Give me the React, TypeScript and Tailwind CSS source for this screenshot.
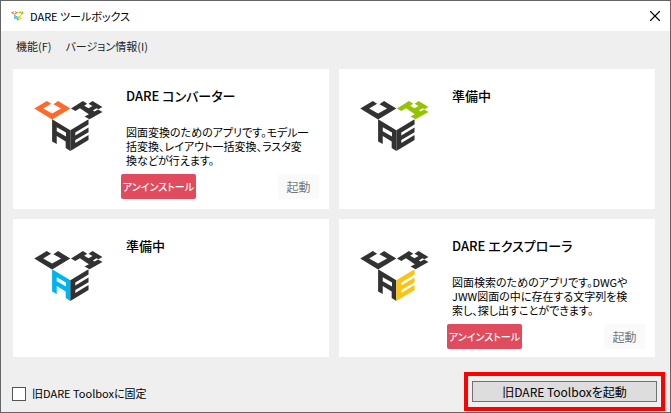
import { X } from 'lucide-react';

type Face = 'd' | 'r' | 'a' | 'e';

const DARK = '#323232';

const accents: Record<Face, string> = {
  d: '#ff6a2b',
  r: '#94c400',
  a: '#00b4f0',
  e: '#ffc20e',
};

const faces: Record<Face, string> = {
  d: 'M0 22L38 -1L51 7L27 22L54 37L81 22L58 9L72 -1L109 22L54 55Z',
  r: 'M111 22L147 -1L160 7L151 13L164 21L176 14L164 7L176 -1L206 17L194 24L188 21L177 28L182 31L193 25L206 32L167 54L152 46L165 39L138 21L124 29Z',
  a: 'M54 54L109 87V150L95 141V121L68 105V129L54 121ZM68 78V90L96 106V94Z',
  e: 'M109 87L164 54V70L124 94V103L164 79V93L124 117V126L164 102V117L109 150Z',
};

function Logo({ active, className }: { active: Face | 'all'; className: string }) {
  return (
    <svg viewBox="0 -1 207 151" className={className} aria-hidden="true">
      {(Object.keys(faces) as Face[]).map((face) => (
        <path
          key={face}
          d={faces[face]}
          fillRule="evenodd"
          fill={active === 'all' || active === face ? accents[face] : DARK}
        />
      ))}
    </svg>
  );
}

interface Tool {
  face: Face;
  title: string;
  lines?: string[];
}

const tools: Tool[] = [
  {
    face: 'd',
    title: 'DARE コンバーター',
    lines: ['図面変換のためのアプリです。モデル一', '括変換、レイアウト一括変換、ラスタ変', '換などが行えます。'],
  },
  { face: 'r', title: '準備中' },
  { face: 'a', title: '準備中' },
  {
    face: 'e',
    title: 'DARE エクスプローラ',
    lines: ['図面検索のためのアプリです。DWGや', 'JWW図面の中に存在する文字列を検', '索し、探し出すことができます。'],
  },
];

function ToolCard({ tool }: { tool: Tool }) {
  return (
    <section className="flex bg-white pt-[17px] pr-2.5 pb-2 pl-[21px]">
      <Logo active={tool.face} className="mt-[15px] h-[50px] w-[69px] shrink-0" />
      <div className="ml-[18px] flex min-w-0 flex-1 flex-col">
        <h2 className="pl-[5px] text-[13px] leading-5 font-medium">{tool.title}</h2>
        {tool.lines && (
          <>
            <p className="mt-[19px] pl-[5px] text-[11px] leading-[14px] whitespace-nowrap">
              {tool.lines.map((line) => (
                <span key={line} className="block">{line}</span>
              ))}
            </p>
            <div className="mt-[7px] flex justify-between">
              <button type="button" className="h-[25px] w-[75px] rounded-xs bg-[#e04b5d] text-[10px] font-medium whitespace-nowrap text-white">
                アンインストール
              </button>
              <button type="button" className="h-[25px] w-[41px] rounded-xs bg-[#fafafa] text-[12px] text-[#777]">
                起動
              </button>
            </div>
          </>
        )}
      </div>
    </section>
  );
}

export default function App() {
  return (
    <div className="flex min-h-screen flex-col border border-[#626669] bg-[#efefef] font-['Noto_Sans_CJK_JP',sans-serif] text-[11px] text-black [font-feature-settings:'palt']">
      <header className="flex h-[30px] items-center bg-white pr-1.5 pl-2.5">
        <Logo active="all" className="h-[10px] w-[13px]" />
        <h1 className="ml-1.5 flex-1">DARE ツールボックス</h1>
        <button type="button" aria-label="閉じる">
          <X className="size-[18px]" strokeWidth={1.5} />
        </button>
      </header>
      <nav className="flex h-[38px] items-center gap-3.5 px-[15px] pb-2 text-[#222]">
        <button type="button">機能(F)</button>
        <button type="button">バージョン情報(I)</button>
      </nav>
      <main className="grid grid-cols-2 grid-rows-[140px_138px] gap-2.5 pr-[15px] pl-3">
        {tools.map((tool) => (
          <ToolCard key={tool.face} tool={tool} />
        ))}
      </main>
      <footer className="mt-auto flex items-center justify-between pr-[5px] pb-px pl-[11px]">
        <label className="flex items-center gap-1.5 pt-1">
          <input type="checkbox" className="size-3.5 appearance-none border border-[#555] bg-white checked:bg-[#555]" />
          旧DARE Toolboxに固定
        </label>
        <div className="border-4 border-[#ff0000] px-1 py-[5px]">
          <button type="button" className="h-[21px] w-[185px] border border-[#707070] bg-[#dddddd] text-[12px] leading-4">
            旧DARE Toolboxを起動
          </button>
        </div>
      </footer>
    </div>
  );
}
